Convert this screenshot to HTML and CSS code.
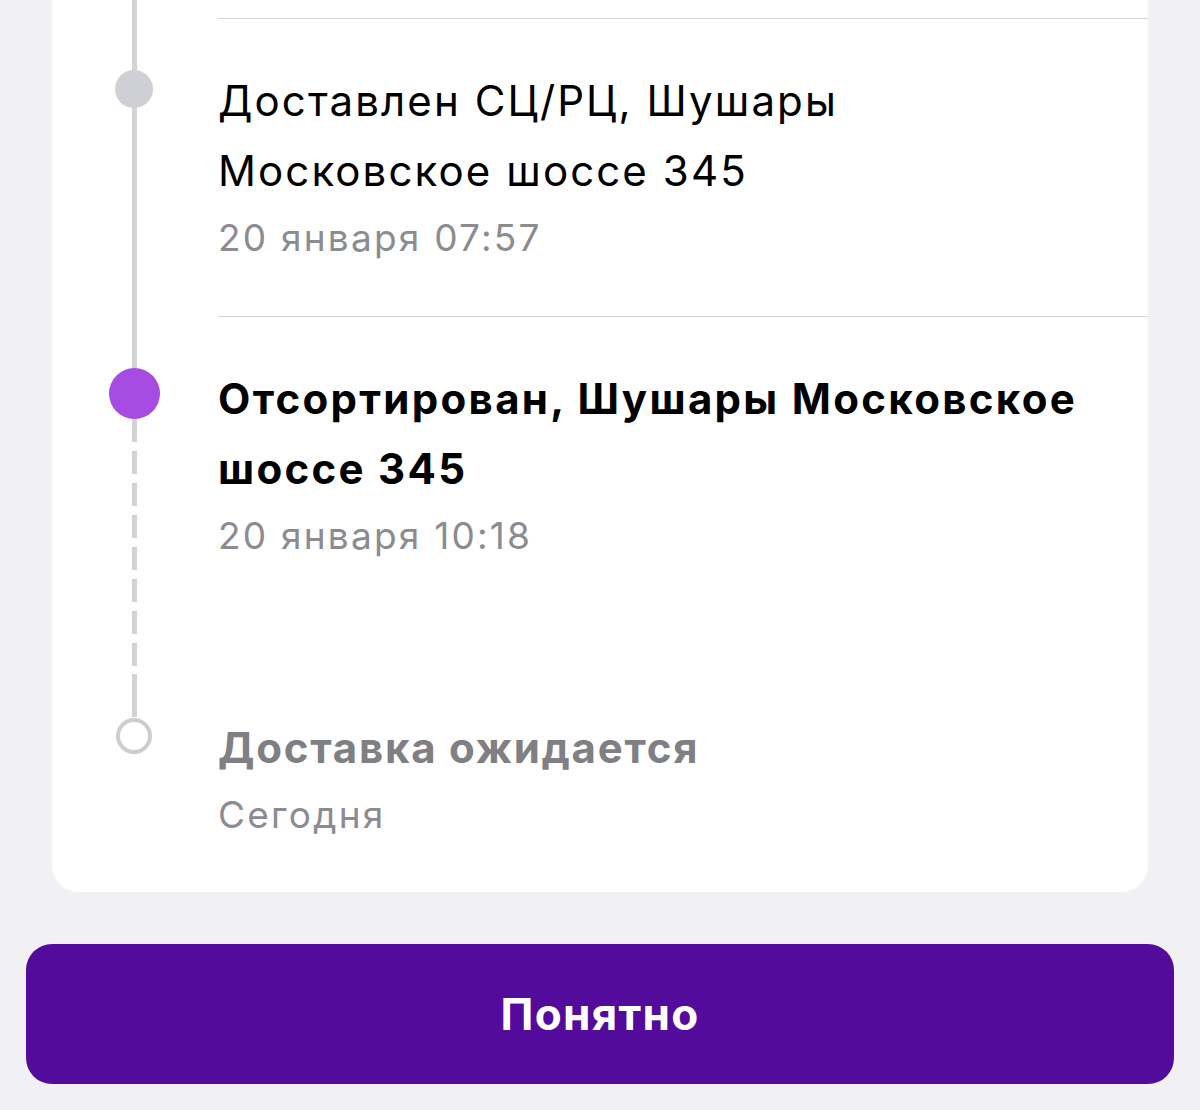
FILE: index.html
```html
<!DOCTYPE html>
<html>
<head>
    <title>Трекинг заказа</title>
    <link rel="stylesheet" href="styles.css">
</head>
<body>
    <div class="sheet">
        <div class="track-card">
            <div class="step step-cut">
                <div class="rail">
                    <div class="seg seg-solid grow"></div>
                </div>
                <div class="step-body"></div>
            </div>

            <div class="step">
                <div class="rail">
                    <div class="seg seg-solid top"></div>
                    <div class="dot dot-done"></div>
                    <div class="seg seg-solid grow"></div>
                </div>
                <div class="step-body divided">
                    <div class="step-title">Доставлен СЦ/РЦ, Шушары<br>Московское шоссе 345</div>
                    <div class="step-date">20 января 07:57</div>
                </div>
            </div>

            <div class="step step-current">
                <div class="rail">
                    <div class="seg seg-solid top"></div>
                    <div class="dot dot-current"></div>
                    <div class="seg seg-dash grow"></div>
                </div>
                <div class="step-body divided">
                    <div class="step-title bold">Отсортирован, Шушары Московское шоссе 345</div>
                    <div class="step-date">20 января 10:18</div>
                </div>
            </div>

            <div class="step step-last">
                <div class="rail">
                    <div class="seg seg-dash top dash-shift"></div>
                    <div class="dot dot-pending"></div>
                </div>
                <div class="step-body">
                    <div class="step-title bold pending">Доставка ожидается</div>
                    <div class="step-date">Сегодня</div>
                </div>
            </div>
        </div>

        <button class="ok-button">Понятно</button>
    </div>
</body>
</html>
```

FILE: styles.css
```css
body {
    margin: 0;
    background-color: #F1F0F5;
    font-family: Inter, "Noto Sans", sans-serif;
}

.sheet {
    padding: 0 26px;
}

.track-card {
    background-color: #fff;
    margin: 0 26px;
    border-radius: 0 0 26px 26px;
    padding-bottom: 45px;
}

.step {
    display: flex;
}

.step-cut {
    height: 18px;
}

.rail {
    width: 166px;
    flex: none;
    display: flex;
    flex-direction: column;
    align-items: center;
    padding-right: 2px;
    box-sizing: border-box;
}

.seg {
    width: 5px;
}

.seg.top {
    height: 52px;
}

.seg.grow {
    flex: 1;
}

.seg-solid {
    background-color: #D3D3D7;
}

.seg-dash {
    background: repeating-linear-gradient(to bottom, #D3D3D7 0 23px, transparent 23px 32px);
}

.dash-shift {
    background-position: 0 -24px;
}

.dot {
    flex: none;
    border-radius: 50%;
    box-sizing: border-box;
}

.dot-done {
    width: 38px;
    height: 38px;
    background-color: #CFCFD6;
}

.dot-current {
    width: 51px;
    height: 51px;
    background-color: #A64CE2;
}

.dot-pending {
    width: 36px;
    height: 36px;
    border: 4px solid #CDCDCF;
    background-color: #fff;
}

.step-body {
    flex: 1;
    padding: 47px 0 46px 0;
}

.step-body.divided {
    border-top: 1px solid #D6D6D9;
}

.step-current .step-body {
    padding-bottom: 98px;
}

.step-last .step-body {
    padding-bottom: 0;
}

.step-title {
    font-size: 42px;
    line-height: 70px;
    letter-spacing: 0.05em;
    color: #000;
    padding-right: 40px;
}

.step-title.bold {
    font-weight: 700;
    letter-spacing: 0.055em;
}

.step-title.pending {
    color: #7F7F84;
    letter-spacing: 0.042em;
}

.step-date {
    font-size: 37px;
    line-height: 64px;
    letter-spacing: 0.06em;
    color: #8C8C90;
}

.ok-button {
    display: block;
    width: 100%;
    height: 140px;
    margin-top: 52px;
    border: none;
    border-radius: 26px;
    background-color: #530B9B;
    color: #fff;
    font-family: Inter, "Noto Sans", sans-serif;
    font-size: 44px;
    font-weight: 700;
    letter-spacing: 0.03em;
    cursor: pointer;
}
```
